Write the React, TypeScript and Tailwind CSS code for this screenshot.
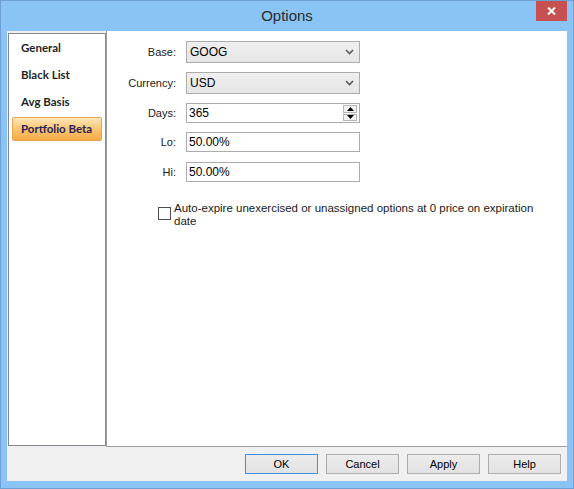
import React from 'react';

const sans = "font-['Liberation_Sans',Arial,sans-serif]";

function Chevron() {
  return (
    <svg width="9" height="6" viewBox="0 0 9 6" className="absolute right-[5px] top-1/2 -translate-y-1/2">
      <path d="M1 1 L4.5 4.5 L8 1" fill="none" stroke="#5a5a5a" strokeWidth="1.6" />
    </svg>
  );
}

function Combo({ value }: { value: string }) {
  return (
    <div className="relative w-[174px] h-full border border-[#acacac] bg-gradient-to-b from-[#efefef] to-[#e6e6e6] pl-[3px] flex items-center text-[12px] text-black">
      {value}
      <Chevron />
    </div>
  );
}

function TextBox({ value, spin }: { value: string; spin?: boolean }) {
  return (
    <div className="relative w-[174px] h-full border border-[#acacac] bg-white pl-[2px] flex items-center text-[12px] text-black">
      {value}
      {spin && (
        <div className="absolute right-[2px] top-[1px] bottom-[1px] w-[14px] flex flex-col gap-[1px]">
          <div className="flex-1 border border-[#b5b5b5] bg-[#f2f2f2] flex items-center justify-center">
            <svg width="7" height="4" viewBox="0 0 7 4"><path d="M0 4 L3.5 0 L7 4 Z" fill="#000" /></svg>
          </div>
          <div className="flex-1 border border-[#b5b5b5] bg-[#f2f2f2] flex items-center justify-center">
            <svg width="7" height="4" viewBox="0 0 7 4"><path d="M0 0 L3.5 4 L7 0 Z" fill="#000" /></svg>
          </div>
        </div>
      )}
    </div>
  );
}

function Row({ label, className, children }: { label: string; className: string; children: React.ReactNode }) {
  return (
    <div className={`flex items-center ${className}`}>
      <div className="w-[69px] text-right text-[11px] text-[#1a1a1a]">{label}</div>
      <div className="ml-[10px] h-full">{children}</div>
    </div>
  );
}

function Btn({ label, primary }: { label: string; primary?: boolean }) {
  return (
    <button
      className={`w-[73px] h-[20px] text-[11px] text-black bg-gradient-to-b from-[#ececec] to-[#e2e2e2] border ${
        primary ? 'border-[#3c8fe0]' : 'border-[#acacac]'
      }`}
    >
      {label}
    </button>
  );
}

export default function App() {
  const items = ['General', 'Black List', 'Avg Basis', 'Portfolio Beta'];
  return (
    <div className={`w-[574px] h-[489px] bg-[#8ac4f7] border border-[#6e9fd4] flex flex-col ${sans}`}>
      {/* Title bar */}
      <div className="relative h-[30px] shrink-0 flex items-center justify-center">
        <span className="text-[15px] text-[#2b2b2b] mt-[1px]">Options</span>
        <div className="absolute right-[6px] top-0 w-[31px] h-[20px] bg-[#c75050] flex items-center justify-center">
          <svg width="9" height="8" viewBox="0 0 9 8">
            <path d="M1 0.5 L8 7.5 M8 0.5 L1 7.5" stroke="#fff" strokeWidth="2" />
          </svg>
        </div>
      </div>

      {/* Client area */}
      <div className="mx-[6px] mb-[7px] flex-1 bg-[#f0f0f0] flex flex-col">
        <div className="h-[416px] flex">
          {/* Category list */}
          <div className="mt-[2px] ml-[1px] w-[98px] h-[413px] border border-[#828790] bg-white">
            {items.map((it, i) => (
              <div
                key={it}
                className={`ml-[3px] mt-[3px] first:mt-[2px] w-[90px] h-[24px] flex items-center pl-[8px] text-[11.5px] font-bold font-['Lato',sans-serif] rounded-[2px] border ${
                  i === 3
                    ? 'bg-gradient-to-b from-[#fde7b6] via-[#fbc56f] to-[#f6ab46] border-[#e6a64e] text-[#24245c]'
                    : 'border-transparent text-[#1f1f1f]'
                }`}
              >
                {it}
              </div>
            ))}
          </div>

          {/* Settings panel */}
          <div className="flex-1 bg-white border-l border-b border-[#a0a0a0] flex flex-col">
            <Row label="Base:" className="mt-[10px] h-[22px]">
              <Combo value="GOOG" />
            </Row>
            <Row label="Currency:" className="mt-[9px] h-[22px]">
              <Combo value="USD" />
            </Row>
            <Row label="Days:" className="mt-[9px] h-[20px]">
              <TextBox value="365" spin />
            </Row>
            <Row label="Lo:" className="mt-[9px] h-[20px]">
              <TextBox value="50.00%" />
            </Row>
            <Row label="Hi:" className="mt-[10px] h-[20px]">
              <TextBox value="50.00%" />
            </Row>

            <div className="mt-[20px] ml-[51px] flex items-start">
              <div className="w-[13px] h-[13px] border border-[#4d4d4d] bg-white mt-[5px] shrink-0" />
              <div className="ml-[3px] text-[11.5px] leading-[13px] text-[#1a1a1a]">
                Auto-expire unexercised or unassigned options at 0 price on expiration
                <br />
                date
              </div>
            </div>
          </div>
        </div>

        {/* Buttons */}
        <div className="flex-1 flex justify-end items-start pt-[7px] pr-[6px] gap-[8px]">
          <Btn label="OK" primary />
          <Btn label="Cancel" />
          <Btn label="Apply" />
          <Btn label="Help" />
        </div>
      </div>
    </div>
  );
}
